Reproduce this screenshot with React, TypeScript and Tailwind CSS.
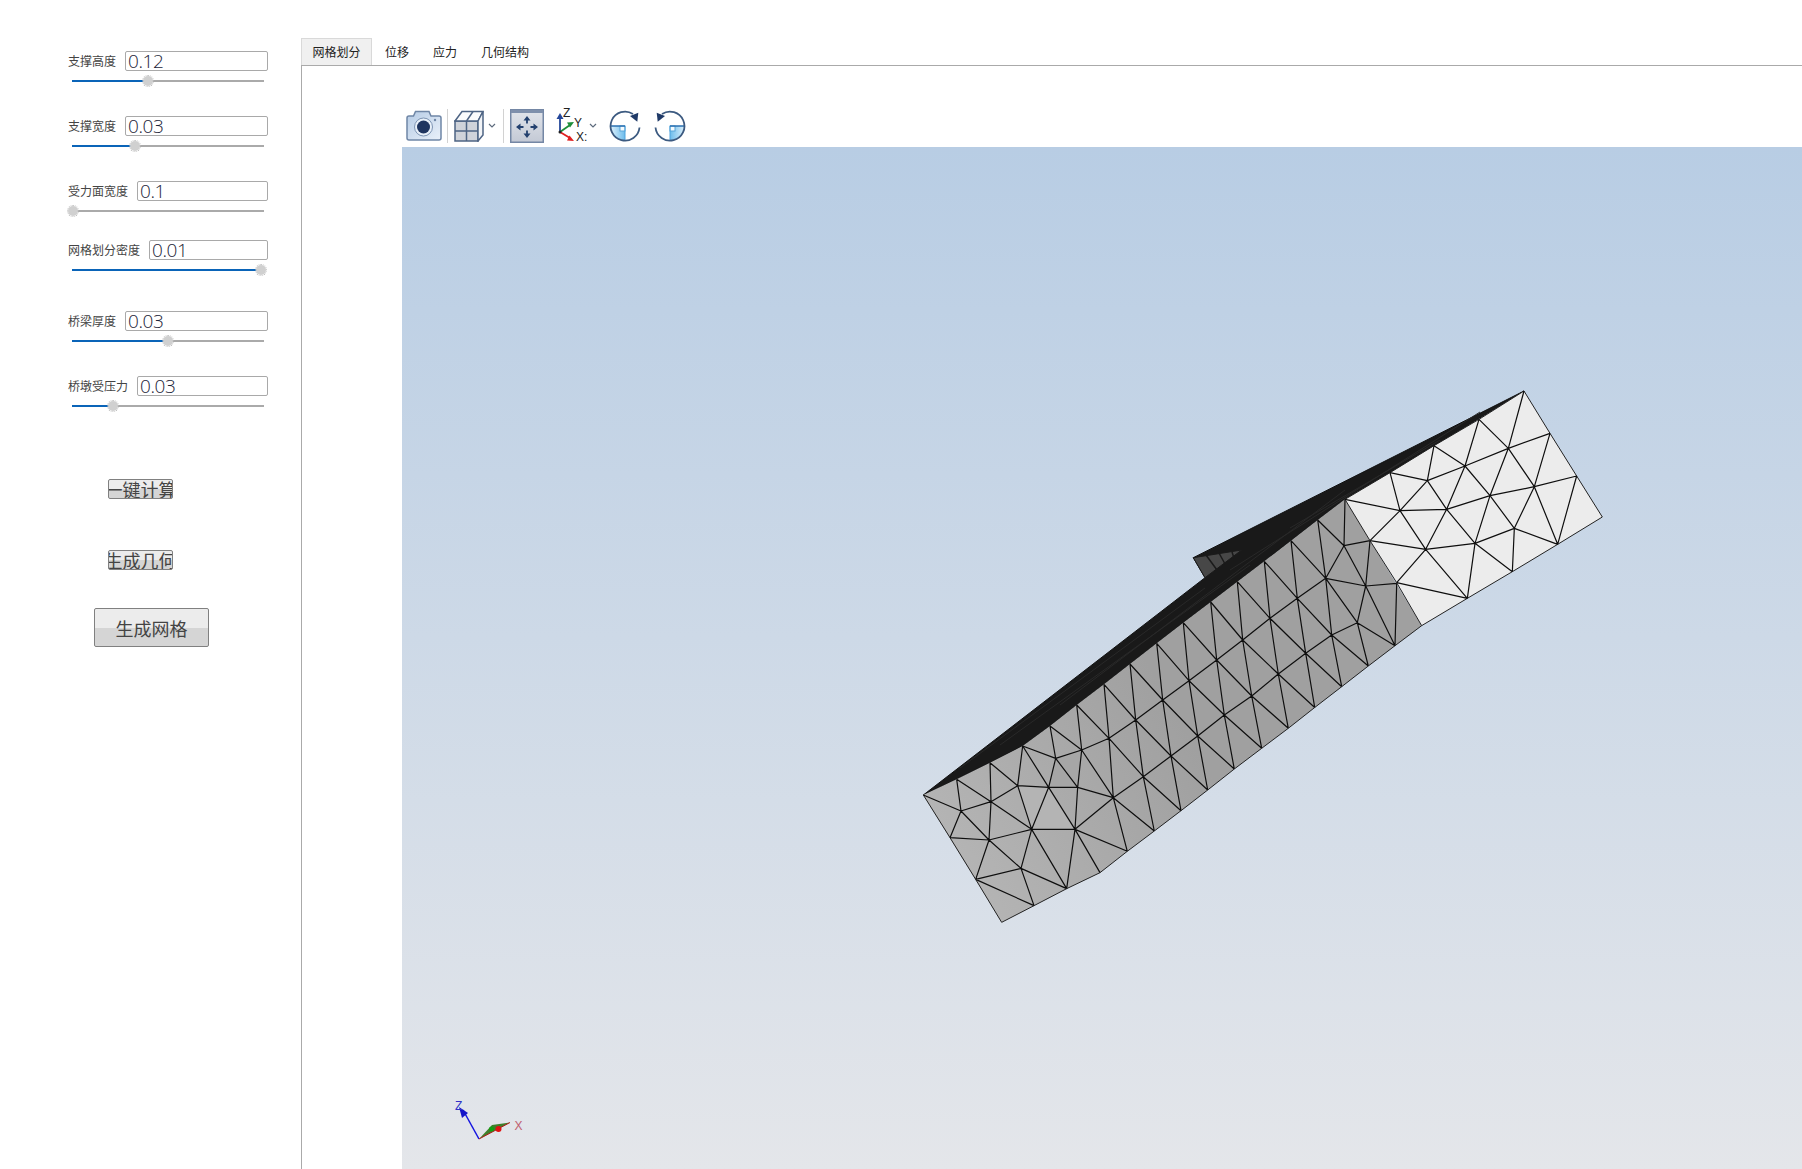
import * as React from "react";

type Pt = [number, number];

const z5 = (x: number, y: number): Pt => [910 + x / 3, 650 + y / 3];
const z6 = (x: number, y: number): Pt => [1180 + x / 3, 380 + y / 3];

// Left, irregular end of the side face
const A0 = z5(40, 435), A1 = z5(140, 388), A2 = z5(240, 338), A3 = z5(338, 288), A4 = z5(420, 228);
const L1 = z5(120, 563), L2 = z5(197, 688), L3 = z5(275, 817);
const B1 = z5(372, 767), B2 = z5(470, 716), B3 = z5(570, 668);
const P1 = z5(153, 483), P2 = z5(243, 455), P3 = z5(323, 407), P4 = z5(416, 412), P5 = z5(503, 412), P6 = z5(437, 325);
const Q1 = z5(237, 570), Q2 = z5(365, 538), Q3 = z5(495, 538), R = z5(333, 655);

// Regular lattice of the side face, in rows from the top edge down
const T: Pt[] = [[1076.7, 705], [1104, 684.3], [1130, 664], [1156.7, 643.3], [1183.3, 622.7], [1210.7, 602], [1237.3, 581.7], [1264.3, 561.3], [1291, 540.7], [1317.7, 520], [1345, 499.3]];
const M: Pt[] = [[1081.7, 750], [1109, 738.3], [1135.7, 720], [1162.7, 700], [1189, 680.7], [1216.7, 660], [1242.7, 640], [1270, 618.3], [1297.3, 598.3], [1325.7, 578.3], [1344, 545.7]];
const N: Pt[] = [[0, 0], [1113.3, 797.7], [1143.3, 776.7], [1171, 756], [1197.7, 736], [1224.3, 715], [1251.7, 696], [1278.3, 674], [1305.7, 653.3], [1331.7, 635]];
const Bt: Pt[] = [B3, [1127.3, 851.3], [1154.3, 831], [1181, 810.7], [1207.7, 790], [1234.3, 769], [1261.7, 748.3], [1288.3, 728.3], [1314.7, 707.5], [1341.7, 686.7], [1368.3, 666], [1395, 645.7]];

const C1: Pt = [1370, 540.7], D1: Pt = [1365.7, 586], E1: Pt = [1396.7, 583.3], F1: Pt = [1357.3, 622.7];

const sideEdges: [Pt, Pt][] = [
  [A0, P1], [A1, P1], [P1, P2], [A1, P2], [A2, P2], [A2, P3], [P2, P3], [A3, P3], [A3, P4], [P3, P4], [P3, Q2], [P2, Q2], [P2, Q1],
  [P1, Q1], [P1, L1], [L1, Q1], [Q1, Q2], [Q1, L2], [L2, R], [Q1, R], [R, Q2], [Q2, B2], [R, B2], [R, B1], [L2, B1], [P4, Q2], [P4, Q3],
  [Q2, Q3], [P4, P5], [P4, P6], [A3, P6], [A4, P6], [P6, P5], [P6, M[0]], [A4, M[0]], [T[0], M[0]], [M[0], P5], [P5, N[1]], [P5, Q3],
  [Q3, N[1]], [Q3, B2], [Q3, B3], [Q3, Bt[1]], [N[1], Bt[1]], [M[0], N[1]], [M[1], N[1]],
  [M[10], C1], [M[10], D1], [M[9], D1], [C1, D1], [D1, E1], [D1, F1], [D1, Bt[11]], [E1, Bt[11]], [M[9], F1], [N[9], F1], [F1, Bt[10]], [F1, Bt[11]], [N[9], Bt[10]],
];
for (let i = 1; i <= 10; i++) {
  sideEdges.push([T[i], M[i]], [T[i - 1], M[i]], [M[i - 1], M[i]]);
}
for (let i = 2; i <= 9; i++) {
  sideEdges.push([M[i], N[i]], [M[i - 1], N[i]], [N[i - 1], N[i]], [N[i], Bt[i]], [N[i - 1], Bt[i]]);
}

// Bright end face
const la = z6(495, 358), lb = z6(630, 278), lc = z6(762, 197), ld = z6(897, 118), le = z6(1032, 33);
const r1 = z6(1110, 160), r2 = z6(1190, 288), r3 = z6(1267, 411);
const b1 = z6(1133, 493), b2 = z6(997, 575), b3 = z6(862, 655), b4 = z6(725, 737);
const s1 = z6(570, 482), s2 = z6(650, 608);
const lf = z6(660, 392), lg = z6(742, 302), lh = z6(855, 258), li = z6(985, 205), lj = z6(1063, 320), lk = z6(930, 347);
const ll = z6(800, 388), lm = z6(737, 508), ln = z6(885, 490), lo = z6(1003, 445);

const lightEdges: [Pt, Pt][] = [
  [la, lf], [lb, lf], [lb, lg], [lc, lg], [lc, lh], [ld, lh], [ld, li], [le, li], [li, r1], [li, lj], [li, lh], [li, lk], [lh, lk], [lh, ll], [lh, lg],
  [lg, lf], [lg, ll], [lf, ll], [lf, s1], [lf, lm], [ll, lm], [ll, lk], [lk, lj], [lk, ln], [lk, lo], [lj, r1], [lj, r2], [lj, lo], [lj, b1], [r2, b1],
  [lo, b1], [lo, ln], [lo, b2], [ln, b2], [ln, b3], [ln, lm], [ln, ll], [s1, lm], [lm, s2], [lm, b3], [s2, b3],
];

const pts = (list: Pt[]) => list.map((p) => p.join(",")).join(" ");
const segs = (list: [Pt, Pt][]) => list.map(([a, b]) => `M${a[0]} ${a[1]}L${b[0]} ${b[1]}`).join("");

const topLine: Pt[] = [A0, A1, A2, A3, A4, ...T];
const bottomLine: Pt[] = [b4, ...Bt.slice(2).reverse(), Bt[1], B3, B2, B1, L3];

function Mesh() {
  return (
    <svg viewBox="402 147 1400 1022" className="block h-full w-full">
      <defs>
        <linearGradient id="sideShade" gradientUnits="userSpaceOnUse" x1="930" y1="860" x2="1180" y2="720">
          <stop offset="0" stopColor="#b6b6b6" />
          <stop offset="1" stopColor="#a0a0a0" />
        </linearGradient>
      </defs>
      {/* top face, seen nearly edge on */}
      <polygon points={pts([A0, [1205, 577.7], [1193.3, 557.7], le, lb, ...[...topLine].reverse()])} fill="#191919" stroke="#111" strokeWidth="1" />
      <path d="M960 768L1205 588M1000 745L1250 565M1060 705L1345 490M1230 570L1480 412M1290 528L1440 440" stroke="#292929" strokeWidth="1" fill="none" />
      <polygon points="1193.3,557.7 1241.7,550 1205,577.7" fill="#474747" stroke="#1a1a1a" strokeWidth="1" />
      <path d="M1206 555L1217 570M1219 553L1225 564M1232 552L1234 558" stroke="#1a1a1a" strokeWidth="1.5" fill="none" />
      {/* side face */}
      <polygon points={pts([...topLine, ...bottomLine])} fill="url(#sideShade)" />
      <polygon points={pts([P4, P5, M[0], P6])} fill="#a6a6a6" />
      <polygon points={pts([P3, Q2, Q3, P4])} fill="#b4b4b4" />
      <path d={segs(sideEdges)} stroke="#0e0e0e" strokeWidth="1.2" fill="none" />
      {/* end face */}
      <polygon points={pts([la, lb, lc, ld, le, r1, r2, r3, b1, b2, b3, b4, s2, s1])} fill="#ececec" stroke="#222" strokeWidth="1" />
      <path d={segs(lightEdges)} stroke="#0e0e0e" strokeWidth="1.2" fill="none" />
      <polyline points={pts(bottomLine)} stroke="#222" strokeWidth="1" fill="none" />
      <polyline points={pts([A0, L1, L2, L3])} stroke="#222" strokeWidth="1" fill="none" />
      {/* axis triad */}
      <line x1="479" y1="1139" x2="463" y2="1110" stroke="#1414e0" strokeWidth="1.5" />
      <polygon points="459,1107 468,1113 462,1118" fill="#1414c8" />
      <polygon points="479,1139 510,1122.5 492,1125" fill="#3f7f2a" />
      <line x1="479" y1="1139" x2="510" y2="1122.5" stroke="#b01818" strokeWidth="1" />
      <circle cx="491.5" cy="1129" r="2.5" fill="#12a012" />
      <circle cx="498.5" cy="1129" r="3" fill="#e01212" />
      <text x="455" y="1110" fontSize="12" fill="#3030c8" fontFamily="Liberation Sans, sans-serif">Z</text>
      <text x="514.5" y="1130" fontSize="12" fill="#c06070" fontFamily="Liberation Sans, sans-serif">X</text>
    </svg>
  );
}

const sliders = [
  { label: "支撑高度", value: "0.12", fill: 76, input: "w-[143px]", top: "mt-[51px]" },
  { label: "支撑宽度", value: "0.03", fill: 63, input: "w-[143px]", top: "mt-[30px]" },
  { label: "受力面宽度", value: "0.1", fill: 1, input: "w-[131px]", top: "mt-[30px]" },
  { label: "网格划分密度", value: "0.01", fill: 189, input: "w-[119px]", top: "mt-[24px]" },
  { label: "桥梁厚度", value: "0.03", fill: 96, input: "w-[143px]", top: "mt-[36px]" },
  { label: "桥墩受压力", value: "0.03", fill: 41, input: "w-[131px]", top: "mt-[30px]" },
];

function SliderRow({ label, value, fill, input, top }: (typeof sliders)[number]) {
  return (
    <div className={top}>
      <div className="flex h-5 items-center justify-between">
        <span className="text-[12px] leading-none text-[#444]">{label}</span>
        <div className={`${input} flex h-5 items-center rounded-[2px] border border-[#a9a9a9] bg-white pl-[2px] font-['Open_Sans',sans-serif] text-[19px] font-light leading-[18px] tracking-[-0.4px] text-[#1c2438]`}>
          {value}
        </div>
      </div>
      <div className="relative mt-[5px] ml-[4px] flex h-[10px] w-[192px] items-center">
        <div className="h-[2px] bg-[#0a64b8]" style={{ width: fill }} />
        <div className="h-[2px] flex-1 bg-[#aaaaaa]" />
        <div className="absolute top-0 h-[10px] w-[10px] rounded-full bg-[#d0d0d0] outline-1 outline-dotted outline-[#bdbdbd]" style={{ left: fill - 5 }} />
      </div>
    </div>
  );
}

function GradButton({ label, className }: { label: string; className: string }) {
  return (
    <div className={`${className} flex items-center justify-center overflow-hidden whitespace-nowrap rounded-[2px] border border-[#808080] bg-[linear-gradient(#ececec_0%,#ececec_50%,#d5d5d5_50%,#d5d5d5_100%)] text-[18px] leading-none text-[#444]`}>
      {label}
    </div>
  );
}

function CameraIcon() {
  return (
    <svg width="36" height="32" viewBox="0 0 36 32" className="shrink-0">
      <defs>
        <linearGradient id="camBody" x1="0" y1="0" x2="1" y2="1">
          <stop offset="0" stopColor="#b5cbe5" />
          <stop offset="1" stopColor="#eaf1fa" />
        </linearGradient>
      </defs>
      <path d="M3 6H7.500L9.500 1.500H23L25 6H33a2 2 0 0 1 2 2v20a2 2 0 0 1-2 2H3a2 2 0 0 1-2-2V8a2 2 0 0 1 2-2z" fill="url(#camBody)" stroke="#6f86a6" strokeWidth="1.5" />
      <circle cx="17.500" cy="17" r="9" fill="#e8f0f9" stroke="#7d94b3" strokeWidth="1" />
      <circle cx="17.500" cy="17" r="6.500" fill="#1f3560" />
      <circle cx="29" cy="10" r="1.200" fill="#6f86a6" />
    </svg>
  );
}

function CubeIcon() {
  return (
    <svg width="30" height="32" viewBox="0 0 30 32" className="shrink-0">
      <rect x="1" y="11" width="23" height="20" fill="#cfd3da" stroke="#4e6484" strokeWidth="1.5" />
      <path d="M1 11L8 1.500H29L24 11z" fill="#fafbfc" stroke="#4e6484" strokeWidth="1.5" />
      <path d="M24 11L29 1.500V25L24 31z" fill="#f2f4f7" stroke="#4e6484" strokeWidth="1.5" />
      <path d="M12.500 11V31M1 21H24M12.500 11L19 1.500" stroke="#4e6484" strokeWidth="1.5" fill="none" />
    </svg>
  );
}

function Chevron() {
  return (
    <svg width="8" height="5" viewBox="0 0 8 5" className="shrink-0">
      <path d="M1 1l3 3 3-3" stroke="#5d6b7d" strokeWidth="1.2" fill="none" />
    </svg>
  );
}

function PanIcon() {
  return (
    <svg width="34" height="34" viewBox="0 0 34 34" className="shrink-0">
      <defs>
        <linearGradient id="panBody" x1="0" y1="0" x2="0" y2="1">
          <stop offset="0" stopColor="#e2e5eb" />
          <stop offset="1" stopColor="#c3c9d5" />
        </linearGradient>
      </defs>
      <rect x="0.750" y="0.750" width="32.500" height="32.500" fill="url(#panBody)" stroke="#7487a5" strokeWidth="1.500" />
      <rect x="1" y="1" width="32" height="3" fill="#7f90ac" />
      <path d="M17 10.500v4M17 21.500v4M9.500 18h4M20.500 18h4" stroke="#23406e" strokeWidth="1.800" />
      <path d="M17 7l-3.500 4.500h7zM17 29l-3.500-4.500h7zM6 18l4.500-3.500v7zM28 18l-4.500-3.500v7z" fill="#23406e" />
    </svg>
  );
}

function AxisIcon() {
  return (
    <svg width="36" height="36" viewBox="0 0 36 36" className="shrink-0">
      <path d="M5 24V9" stroke="#24479a" strokeWidth="1.800" />
      <path d="M5 5l-3.500 6h7z" fill="#24479a" />
      <path d="M5 24L15 17" stroke="#1d8f3a" strokeWidth="1.800" />
      <path d="M19 14l-7 .5 3 5z" fill="#1d8f3a" />
      <path d="M5 24L15 30" stroke="#e02020" strokeWidth="1.800" />
      <path d="M19 33l-7-.5 2.500-5z" fill="#e02020" />
      <circle cx="5" cy="24" r="1.500" fill="#222" />
      <text x="8" y="9" fontSize="12" fill="#222" fontFamily="Liberation Sans, sans-serif">Z</text>
      <text x="19" y="19" fontSize="12" fill="#222" fontFamily="Liberation Sans, sans-serif">Y</text>
      <text x="21" y="33" fontSize="12" fill="#222" fontFamily="Liberation Sans, sans-serif">X:</text>
    </svg>
  );
}

function RotateIcon({ flip }: { flip?: boolean }) {
  const id = flip ? "rotFillB" : "rotFillA";
  return (
    <svg width="32" height="32" viewBox="0 0 32 32" className={flip ? "shrink-0 -scale-x-100" : "shrink-0"}>
      <defs>
        <linearGradient id={id} x1="0" y1="0" x2="1" y2="0">
          <stop offset="0" stopColor="#dff1fb" />
          <stop offset="1" stopColor="#6cbcec" />
        </linearGradient>
      </defs>
      <path d="M1.500 16H16V30.500A14.500 14.500 0 0 1 1.500 16z" fill={`url(#${id})`} />
      <rect x="11" y="16" width="5" height="5" fill="#f4fafd" stroke="#5aa6d8" strokeWidth="1" />
      <path d="M16 16V30" stroke="#4fa3dc" strokeWidth="1" />
      <path d="M1.500 16H16" stroke="#2a6fb0" strokeWidth="1.500" />
      <path d="M30.500 17.500A14.500 14.500 0 1 1 24 4" stroke="#3c5a80" strokeWidth="1.800" fill="none" />
      <path d="M21 6L29.300 2.700L28.300 11.700z" fill="#1f3a68" />
    </svg>
  );
}

function Sep() {
  return <div className="h-[34px] w-px shrink-0 bg-[#d2d2d2]" />;
}

const tabs = ["位移", "应力", "几何结构"];

export default function App() {
  return (
    <div className="flex h-[1169px] w-[1802px] overflow-hidden bg-white font-['Noto_Sans_CJK_SC',sans-serif]">
      {/* Parameter panel */}
      <aside className="w-[301px] shrink-0 pl-[68px] pr-[33px]">
        {sliders.map((s) => (
          <SliderRow key={s.label} {...s} />
        ))}
        <GradButton label="一键计算" className="mt-[68px] ml-[40px] h-5 w-[65px]" />
        <GradButton label="生成几何" className="mt-[51px] ml-[40px] h-5 w-[65px]" />
        <GradButton label="生成网格" className="mt-[38px] ml-[26px] h-[39px] w-[115px]" />
      </aside>

      {/* Tab widget */}
      <main className="flex min-w-0 flex-1 flex-col pt-[38px]">
        <div className="flex h-[28px] shrink-0 items-stretch border-b border-[#aaaaaa] text-[12px] text-[#222]">
          <div className="flex w-[71px] items-center justify-center border border-b-0 border-[#d9d9d9] bg-[#f0f0f0]">网格划分</div>
          <div className="ml-[1px] flex">
            {tabs.map((t) => (
              <div key={t} className="flex items-center px-3">{t}</div>
            ))}
          </div>
        </div>
        <div className="flex min-h-0 flex-1 flex-col border-l border-[#aaaaaa] pl-[100px]">
          <div className="flex h-[81px] shrink-0 items-center pt-[38px] pl-[4px]">
            <CameraIcon />
            <div className="ml-[5px]"><Sep /></div>
            <div className="ml-[6px]"><CubeIcon /></div>
            <div className="ml-[4px]"><Chevron /></div>
            <div className="ml-[7px]"><Sep /></div>
            <div className="ml-[6px]"><PanIcon /></div>
            <div className="ml-[11px]"><AxisIcon /></div>
            <div className="ml-[-2px]"><Chevron /></div>
            <div className="ml-[12px]"><RotateIcon /></div>
            <div className="ml-[13px]"><RotateIcon flip /></div>
          </div>
          <div className="min-h-0 flex-1 bg-gradient-to-b from-[#b8cde4] to-[#e4e6ea]">
            <Mesh />
          </div>
        </div>
      </main>
    </div>
  );
}
